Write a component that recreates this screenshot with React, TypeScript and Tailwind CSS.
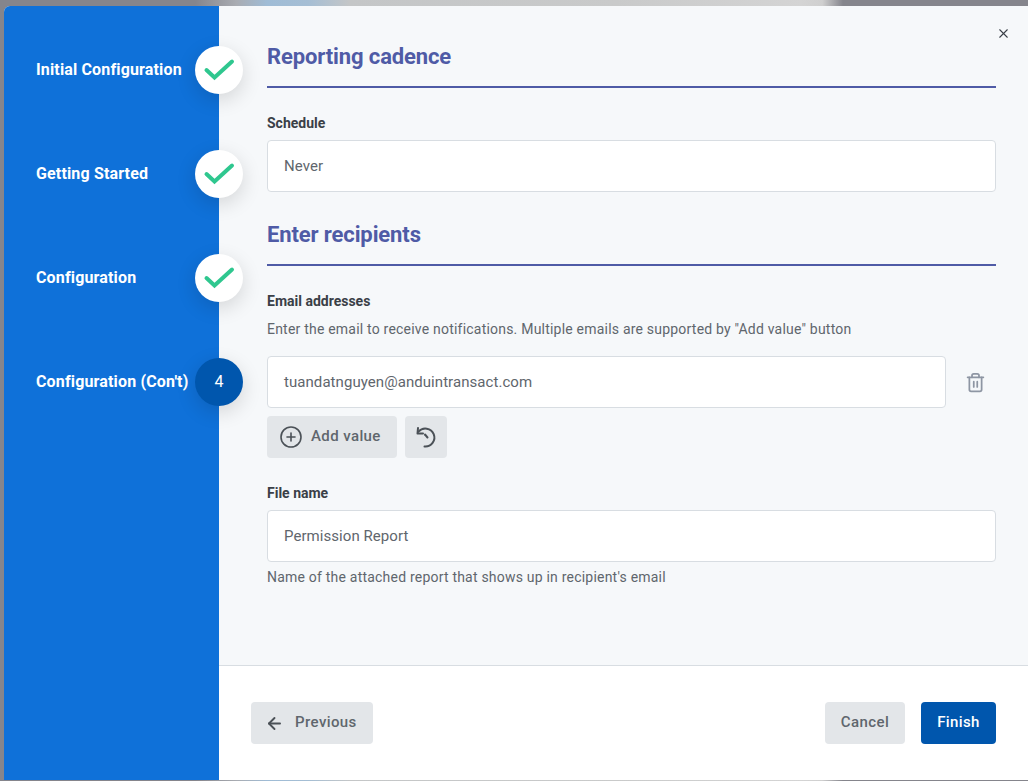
import { ArrowLeft, CirclePlus, Trash2, X } from "lucide-react"

const steps = ["Initial Configuration", "Getting Started", "Configuration", "Configuration (Con't)"]

function Step({ label, index }: { label: string; index: number }) {
  const done = index < 3
  return (
    <div className="flex h-12 items-center justify-between">
      <span className="pl-8 text-[16px] leading-6 font-bold tracking-[0.15px] whitespace-nowrap text-white">{label}</span>
      <div
        className={
          "relative -mr-6 flex h-12 w-12 shrink-0 items-center justify-center rounded-full shadow-[0_6px_20px_rgba(0,0,0,0.14)] " +
          (done ? "bg-white" : "bg-[#0056ad]")
        }
      >
        {done ? (
          <svg viewBox="0 0 48 48" className="h-12 w-12" fill="none">
            <path d="M11.5 24 19.5 31.5 37 15.5" stroke="#2fc78f" strokeWidth="4" strokeLinecap="round" strokeLinejoin="miter" />
          </svg>
        ) : (
          <span className="text-[16px] text-white">4</span>
        )}
      </div>
    </div>
  )
}

function Heading({ children }: { children: string }) {
  return (
    <div className="border-b-2 border-[#4f5ba6] pb-[14px]">
      <h2 className="text-[22px] leading-[30px] font-bold tracking-[-0.12px] text-[#4f5ba6]">{children}</h2>
    </div>
  )
}

function Field({ value, className = "" }: { value: string; className?: string }) {
  return (
    <div
      className={
        "flex h-[52px] items-center rounded border border-[#d8dde2] bg-white px-4 text-[15px] tracking-[0.06px] text-[#5f666d] " +
        className
      }
    >
      {value}
    </div>
  )
}

function Label({ children }: { children: string }) {
  return <div className="text-[14px] leading-5 font-bold text-[#3a4047]">{children}</div>
}

export default function App() {
  return (
    <div
      className="h-[781px] w-[1028px] overflow-hidden bg-[linear-gradient(90deg,#85858c_0%,#85858c_19%,#a9acb2_23%,#9fbcd6_26%,#a5bed4_30%,#c4c6c7_34%,#c9caca_60%,#d4d4d4_78%,#cfcfcf_80%,#85858c_82%,#85858c_100%)] pt-[6px] pb-px"
      style={{ fontFamily: "Roboto, sans-serif" }}
    >
      <div className="h-full bg-[#85858c] pl-1">
        <div className="flex h-full overflow-hidden rounded-tl-md bg-white">
          <aside className="relative z-10 flex w-[215px] shrink-0 flex-col gap-14 bg-[#0f71d9] pt-10">
            {steps.map((s, i) => (
              <Step key={s} label={s} index={i} />
            ))}
          </aside>

          <main className="flex min-w-0 flex-1 flex-col">
            <div className="relative h-[660px] border-b border-[#d8dde2] bg-[#f6f8fa] pt-9 pr-8 pl-12">
              <button className="absolute top-[20px] right-[17px] text-[#3a4047]">
                <X className="h-[15px] w-[15px]" strokeWidth={1.75} />
              </button>

              <Heading>Reporting cadence</Heading>
              <div className="mt-[25px] mb-[7px]">
                <Label>Schedule</Label>
              </div>
              <Field value="Never" />

              <div className="mt-7">
                <Heading>Enter recipients</Heading>
              </div>
              <div className="mt-[25px]">
                <Label>Email addresses</Label>
              </div>
              <p className="mt-2 text-[14px] leading-5 tracking-[0.21px] text-[#5f666d]">
                Enter the email to receive notifications. Multiple emails are supported by "Add value" button
              </p>
              <div className="mt-[17px] flex items-center">
                <Field value="tuandatnguyen@anduintransact.com" className="flex-1" />
                <Trash2 className="mr-[10px] ml-[19px] h-[21px] w-[21px] text-[#8e96a3]" strokeWidth={2} />
              </div>
              <div className="mt-2 flex gap-2">
                <button className="flex h-[42px] w-[130px] items-center gap-2 rounded bg-[#e3e6e9] pl-3 text-[15px] leading-5 font-medium tracking-[0.4px] text-[#5f666d]">
                  <CirclePlus className="h-6 w-6 text-[#4b5157]" strokeWidth={1.6} />
                  <span className="pb-0.5">Add value</span>
                </button>
                <button className="flex h-[42px] w-[42px] items-center justify-center rounded bg-[#e3e6e9]">
                  <svg viewBox="0 0 24 24" className="h-6 w-6 text-[#4b5157]" fill="none" stroke="currentColor" strokeWidth="2" strokeLinecap="round" strokeLinejoin="round">
                    <path d="M4.5 6.7A9 9 0 1 1 10.5 21.5" />
                    <path d="M4 3 3.5 8.5 9 8.5" />
                    <path d="M11 9.5 13.5 12.5" />
                  </svg>
                </button>
              </div>
              <div className="mt-[25px] mb-[7px]">
                <Label>File name</Label>
              </div>
              <Field value="Permission Report" />
              <p className="mt-[5px] text-[14px] leading-5 tracking-[0.21px] text-[#5f666d]">
                Name of the attached report that shows up in recipient's email
              </p>
            </div>

            <footer className="flex flex-1 items-start justify-between bg-white px-8 pt-9">
              <button className="flex h-[42px] w-[122px] items-center gap-[11px] rounded bg-[#e3e6e9] pl-[14px] text-[15px] leading-5 font-medium tracking-[0.4px] text-[#5f666d]">
                <ArrowLeft className="h-[19px] w-[19px] text-[#4b5157]" strokeWidth={2.4} />
                <span className="pb-0.5">Previous</span>
              </button>
              <div className="flex gap-4">
                <button className="h-[42px] w-[80px] rounded bg-[#e3e6e9] pb-0.5 text-[15px] leading-5 font-medium tracking-[0.4px] text-[#5f666d]">
                  Cancel
                </button>
                <button className="h-[42px] w-[75px] rounded bg-[#0056ad] pb-0.5 text-[15px] leading-5 font-medium tracking-[0.4px] text-white">
                  Finish
                </button>
              </div>
            </footer>
          </main>
        </div>
      </div>
    </div>
  )
}
